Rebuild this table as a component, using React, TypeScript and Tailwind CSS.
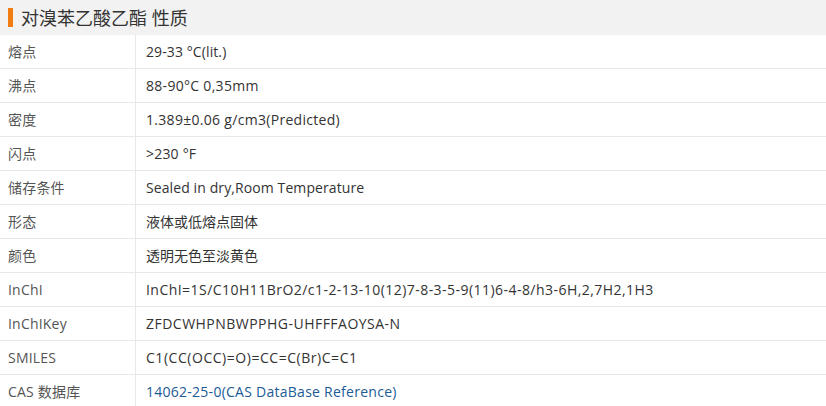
import React from "react";

const rows: { k: string; v: string; t: string; link?: boolean }[] = [
  { k: "熔点", v: "29-33 °C(lit.)", t: "tracking-[0.1px]" },
  { k: "沸点", v: "88-90°C 0,35mm", t: "tracking-[0.3px]" },
  { k: "密度", v: "1.389±0.06 g/cm3(Predicted)", t: "tracking-[0.3px]" },
  { k: "闪点", v: ">230 °F", t: "tracking-[0.2px]" },
  { k: "储存条件", v: "Sealed in dry,Room Temperature", t: "tracking-[0.1px]" },
  { k: "形态", v: "液体或低熔点固体", t: "tracking-normal" },
  { k: "颜色", v: "透明无色至淡黄色", t: "tracking-normal" },
  { k: "InChI", v: "InChI=1S/C10H11BrO2/c1-2-13-10(12)7-8-3-5-9(11)6-4-8/h3-6H,2,7H2,1H3", t: "tracking-[0.46px]" },
  { k: "InChIKey", v: "ZFDCWHPNBWPPHG-UHFFFAOYSA-N", t: "tracking-[0.48px]" },
  { k: "SMILES", v: "C1(CC(OCC)=O)=CC=C(Br)C=C1", t: "tracking-[0.54px]" },
  { k: "CAS 数据库", v: "14062-25-0(CAS DataBase Reference)", t: "tracking-[0.26px]", link: true },
];

export default function App() {
  return (
    <div
      className="w-[826px] h-[406px] overflow-hidden bg-white"
      style={{ fontFamily: '"Open Sans", "Noto Sans CJK SC", sans-serif' }}
    >
      <div className="h-[35px] bg-[#f2f2f2] flex items-center pl-[8px]">
        <div className="w-[5px] h-[19px] bg-[#f07c12] mr-[8px]" />
        <span className="text-[18px] text-[#333] leading-none">对溴苯乙酸乙酯 性质</span>
      </div>
      {rows.map((r) => (
        <div key={r.k} className="flex h-[34px] border-b border-[#e8e8e8]">
          <div className="w-[136px] shrink-0 border-r border-[#e8e8e8] flex items-center pl-[8px] text-[14px] text-[#555] tracking-[0.2px]">
            {r.k}
          </div>
          <div
            className={`flex items-center pl-[10px] text-[14px] ${r.t} ${r.link ? "text-[#1b5b96]" : "text-[#333]"}`}
          >
            {r.v}
          </div>
        </div>
      ))}
    </div>
  );
}
